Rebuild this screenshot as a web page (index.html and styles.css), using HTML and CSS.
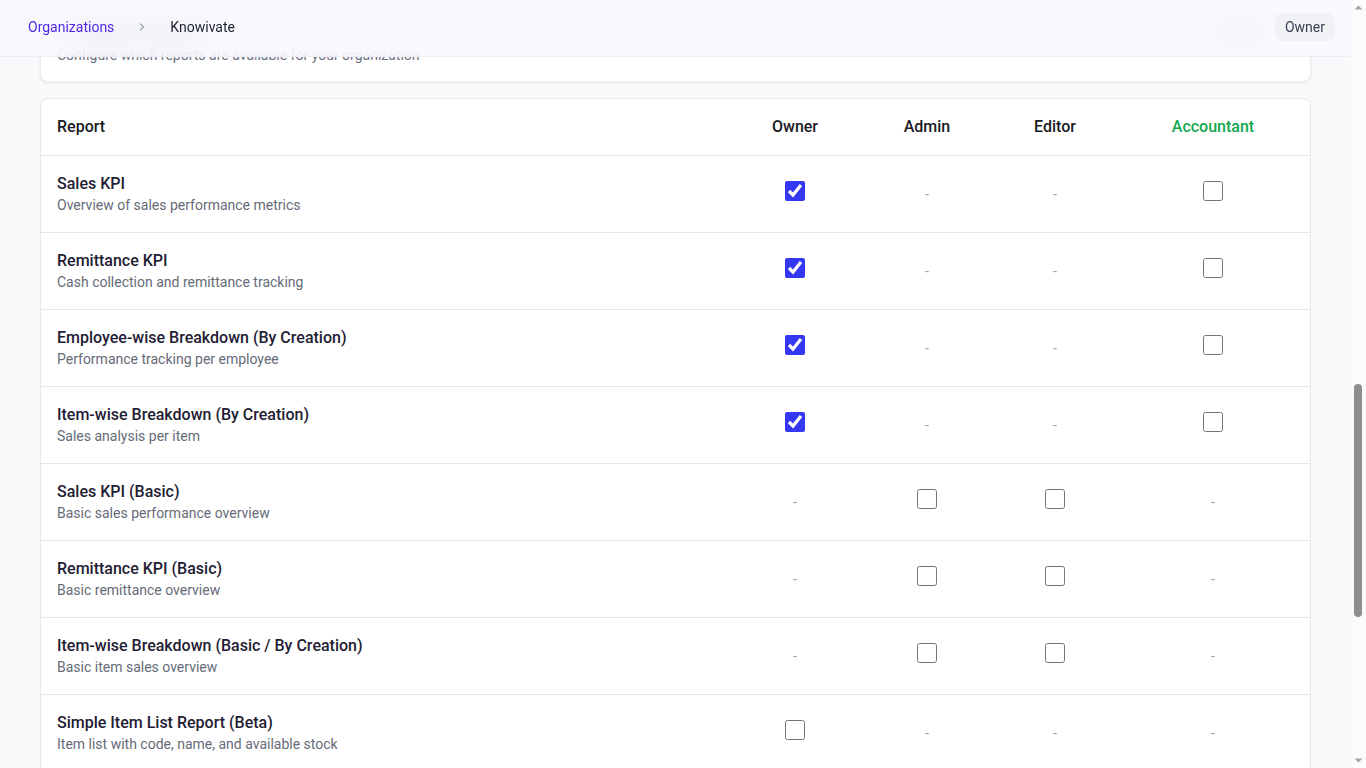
FILE: index.html
```html
<!DOCTYPE html>
<html lang="en">
<head>
    <meta charset="UTF-8">
    <meta name="viewport" content="width=device-width, initial-scale=1.0">
    <title>Knowivate - Organization Settings</title>
    <link rel="stylesheet" href="styles.css">
</head>
<body>
<div class="scroller" id="scroller">
    <header class="topbar">
        <nav class="crumbs">
            <a href="#" class="crumb-link">Organizations</a>
            <svg class="crumb-sep" width="12" height="12" viewBox="0 0 12 12"><path d="M4.5 3l3 3-3 3" fill="none" stroke="#9ca3af" stroke-width="1.2" stroke-linecap="round" stroke-linejoin="round"/></svg>
            <span class="crumb-current">Knowivate</span>
        </nav>
        <span class="role-badge">Owner</span>
    </header>

    <main class="page">
        <div class="page-head">
            <h1>Knowivate</h1>
            <p>Manage organization details, members and report access</p>
        </div>

        <section class="card">
            <h2 class="card-title">Organization Details</h2>
            <p class="card-desc">Basic information about your organization</p>
            <div class="details-grid">
                <div class="field"><span class="field-label">Name</span><span class="field-value">Knowivate</span></div>
                <div class="field"><span class="field-label">Slug</span><span class="field-value">knowivate</span></div>
                <div class="field"><span class="field-label">Created</span><span class="field-value">12 Mar 2024</span></div>
                <div class="field"><span class="field-label">Plan</span><span class="field-value">Business</span></div>
                <div class="field"><span class="field-label">Timezone</span><span class="field-value">Asia/Kolkata</span></div>
                <div class="field"><span class="field-label">Currency</span><span class="field-value">INR</span></div>
            </div>
        </section>

        <section class="card">
            <h2 class="card-title">Members</h2>
            <p class="card-desc">People who have access to this organization</p>
            <div class="member-list">
                <div class="member"><span class="avatar">AK</span><div class="member-info"><span class="member-name">Arjun Kumar</span><span class="member-mail">arjun@knowivate.com</span></div><span class="member-role">Owner</span></div>
                <div class="member"><span class="avatar">PS</span><div class="member-info"><span class="member-name">Priya Sharma</span><span class="member-mail">priya@knowivate.com</span></div><span class="member-role">Admin</span></div>
                <div class="member"><span class="avatar">RV</span><div class="member-info"><span class="member-name">Rahul Verma</span><span class="member-mail">rahul@knowivate.com</span></div><span class="member-role">Editor</span></div>
                <div class="member"><span class="avatar">NI</span><div class="member-info"><span class="member-name">Neha Iyer</span><span class="member-mail">neha@knowivate.com</span></div><span class="member-role">Editor</span></div>
                <div class="member"><span class="avatar">SM</span><div class="member-info"><span class="member-name">Suresh Menon</span><span class="member-mail">suresh@knowivate.com</span></div><span class="member-role">Accountant</span></div>
                <div class="member"><span class="avatar">DG</span><div class="member-info"><span class="member-name">Divya Gupta</span><span class="member-mail">divya@knowivate.com</span></div><span class="member-role">Editor</span></div>
                <div class="member"><span class="avatar">VN</span><div class="member-info"><span class="member-name">Vikram Nair</span><span class="member-mail">vikram@knowivate.com</span></div><span class="member-role">Admin</span></div>
            </div>
        </section>

        <section class="card settings-card">
            <div class="settings-head">
                <div>
                    <h2 class="card-title">
                        <svg width="18" height="18" viewBox="0 0 24 24" fill="none" stroke="#5028e6" stroke-width="2" stroke-linecap="round" stroke-linejoin="round"><path d="M3 3v18h18"/><path d="M7 15l4-4 3 3 5-6"/></svg>
                        Report Access
                    </h2>
                    <p class="card-desc">Configure which reports are available for your organization</p>
                </div>
                <button class="ghost-btn">Reset</button>
            </div>
        </section>

        <div class="table-card" id="reportTable">
            <div class="report-row head-row">
                <div class="cell report-cell">Report</div>
                <div class="cell">Owner</div>
                <div class="cell">Admin</div>
                <div class="cell">Editor</div>
                <div class="cell role-accent">Accountant</div>
            </div>

            <div class="report-row">
                <div class="cell report-cell"><span class="report-name">Sales KPI</span><span class="report-desc">Overview of sales performance metrics</span></div>
                <div class="cell"><input type="checkbox" checked></div>
                <div class="cell"><span class="na">-</span></div>
                <div class="cell"><span class="na">-</span></div>
                <div class="cell"><input type="checkbox"></div>
            </div>
            <div class="report-row">
                <div class="cell report-cell"><span class="report-name">Remittance KPI</span><span class="report-desc">Cash collection and remittance tracking</span></div>
                <div class="cell"><input type="checkbox" checked></div>
                <div class="cell"><span class="na">-</span></div>
                <div class="cell"><span class="na">-</span></div>
                <div class="cell"><input type="checkbox"></div>
            </div>
            <div class="report-row">
                <div class="cell report-cell"><span class="report-name">Employee-wise Breakdown (By Creation)</span><span class="report-desc">Performance tracking per employee</span></div>
                <div class="cell"><input type="checkbox" checked></div>
                <div class="cell"><span class="na">-</span></div>
                <div class="cell"><span class="na">-</span></div>
                <div class="cell"><input type="checkbox"></div>
            </div>
            <div class="report-row">
                <div class="cell report-cell"><span class="report-name">Item-wise Breakdown (By Creation)</span><span class="report-desc">Sales analysis per item</span></div>
                <div class="cell"><input type="checkbox" checked></div>
                <div class="cell"><span class="na">-</span></div>
                <div class="cell"><span class="na">-</span></div>
                <div class="cell"><input type="checkbox"></div>
            </div>
            <div class="report-row">
                <div class="cell report-cell"><span class="report-name">Sales KPI (Basic)</span><span class="report-desc">Basic sales performance overview</span></div>
                <div class="cell"><span class="na">-</span></div>
                <div class="cell"><input type="checkbox"></div>
                <div class="cell"><input type="checkbox"></div>
                <div class="cell"><span class="na">-</span></div>
            </div>
            <div class="report-row">
                <div class="cell report-cell"><span class="report-name">Remittance KPI (Basic)</span><span class="report-desc">Basic remittance overview</span></div>
                <div class="cell"><span class="na">-</span></div>
                <div class="cell"><input type="checkbox"></div>
                <div class="cell"><input type="checkbox"></div>
                <div class="cell"><span class="na">-</span></div>
            </div>
            <div class="report-row">
                <div class="cell report-cell"><span class="report-name">Item-wise Breakdown (Basic / By Creation)</span><span class="report-desc">Basic item sales overview</span></div>
                <div class="cell"><span class="na">-</span></div>
                <div class="cell"><input type="checkbox"></div>
                <div class="cell"><input type="checkbox"></div>
                <div class="cell"><span class="na">-</span></div>
            </div>
            <div class="report-row">
                <div class="cell report-cell"><span class="report-name">Simple Item List Report (Beta)</span><span class="report-desc">Item list with code, name, and available stock</span></div>
                <div class="cell"><input type="checkbox"></div>
                <div class="cell"><span class="na">-</span></div>
                <div class="cell"><span class="na">-</span></div>
                <div class="cell"><span class="na">-</span></div>
            </div>
            <div class="report-row">
                <div class="cell report-cell"><span class="report-name">Customer-wise Breakdown</span><span class="report-desc">Sales analysis per customer</span></div>
                <div class="cell"><input type="checkbox"></div>
                <div class="cell"><span class="na">-</span></div>
                <div class="cell"><span class="na">-</span></div>
                <div class="cell"><input type="checkbox"></div>
            </div>
            <div class="report-row">
                <div class="cell report-cell"><span class="report-name">Outstanding Receivables</span><span class="report-desc">Pending payments grouped by customer</span></div>
                <div class="cell"><input type="checkbox"></div>
                <div class="cell"><span class="na">-</span></div>
                <div class="cell"><span class="na">-</span></div>
                <div class="cell"><input type="checkbox"></div>
            </div>
            <div class="report-row">
                <div class="cell report-cell"><span class="report-name">Stock Summary (Beta)</span><span class="report-desc">Current stock levels across warehouses</span></div>
                <div class="cell"><input type="checkbox"></div>
                <div class="cell"><span class="na">-</span></div>
                <div class="cell"><span class="na">-</span></div>
                <div class="cell"><span class="na">-</span></div>
            </div>
        </div>

        <p class="footnote">Changes are saved automatically.</p>
    </main>
</div>

<div class="rail">
    <svg class="rail-arrow" width="15" height="15" viewBox="0 0 15 15"><path d="M3.5 9.5h8l-4-4z" fill="#a3a3a3"/></svg>
    <div class="rail-track"><div class="rail-thumb"></div></div>
    <svg class="rail-arrow" width="15" height="15" viewBox="0 0 15 15"><path d="M3.5 5.5h8l-4 4z" fill="#a3a3a3"/></svg>
</div>

    <script src="script.js"></script>
</body>
</html>
```

FILE: styles.css
```css
* {
    box-sizing: border-box;
}
html, body {
    height: 100%;
    overflow: hidden;
}
body {
    margin: 0;
    display: flex;
    font-family: Roboto, "Noto Sans", sans-serif;
    background: #f8f9fb;
    color: #1f2033;
}
.scroller {
    flex: 1;
    height: 100vh;
    overflow-y: scroll;
}

/* scrollbar rail */
.rail {
    width: 15px;
    flex-shrink: 0;
    display: flex;
    flex-direction: column;
    background: #fbfbfa;
}
.rail-arrow {
    display: block;
    flex-shrink: 0;
}
.rail-track {
    flex: 1;
    padding-top: 369px;
}
.rail-thumb {
    width: 8px;
    height: 233px;
    margin-left: 3px;
    border-radius: 4px;
    background: #8e8e8e;
}

/* top bar */
.topbar {
    position: sticky;
    top: 0;
    z-index: 10;
    height: 57px;
    display: flex;
    align-items: center;
    justify-content: space-between;
    padding: 0 16px 2px;
    background: rgba(248, 249, 252, 0.82);
    backdrop-filter: blur(14px);
    border-bottom: 1px solid #eceef3;
}
.crumbs {
    display: flex;
    align-items: center;
    gap: 10px;
    font-size: 14px;
}
.crumb-link {
    color: #5028e6;
    text-decoration: none;
    padding: 4px 12px;
}
.crumb-current {
    color: #1f2033;
    padding: 4px 12px;
}
.role-badge {
    font-size: 14px;
    color: #374151;
    background: #f1f2f6;
    padding: 6px 10px;
    border-radius: 8px;
}

/* page */
.page {
    padding: 0 40px 40px;
}
.page-head {
    padding: 32px 0 24px;
}
.page-head h1 {
    margin: 0;
    font-size: 28px;
    font-weight: 600;
}
.page-head p {
    margin: 6px 0 0;
    color: #6b7280;
    font-size: 14px;
}
.card {
    background: white;
    border: 1px solid #eceef2;
    border-radius: 8px;
    box-shadow: 0 1px 3px rgba(0,0,0,0.08);
    padding: 16px;
    margin-bottom: 24px;
}
.card-title {
    margin: 0;
    font-size: 18px;
    line-height: 28px;
    font-weight: 600;
    display: flex;
    align-items: center;
    gap: 8px;
}
.card-desc {
    margin: 0;
    font-size: 14px;
    line-height: 20px;
    color: #6b7280;
}
.details-grid {
    display: grid;
    grid-template-columns: repeat(3, 1fr);
    gap: 20px;
    margin-top: 24px;
}
.field {
    display: flex;
    flex-direction: column;
    gap: 6px;
    padding: 12px;
    border: 1px solid #eef0f3;
    border-radius: 6px;
}
.field-label {
    font-size: 12px;
    color: #6b7280;
}
.field-value {
    font-size: 15px;
    font-weight: 500;
}
.member-list {
    margin-top: 16px;
}
.member {
    display: flex;
    align-items: center;
    gap: 12px;
    padding: 12px 0;
    border-top: 1px solid #eef0f3;
}
.avatar {
    width: 40px;
    height: 40px;
    border-radius: 50%;
    background: #ede9fe;
    color: #5028e6;
    display: flex;
    align-items: center;
    justify-content: center;
    font-size: 14px;
    font-weight: 600;
}
.member-info {
    flex: 1;
    display: flex;
    flex-direction: column;
}
.member-name {
    font-weight: 500;
}
.member-mail {
    font-size: 13px;
    color: #6b7280;
}
.member-role {
    font-size: 13px;
    background: #f1f2f6;
    padding: 4px 10px;
    border-radius: 12px;
}
.settings-card {
    margin-bottom: 16px;
}
.settings-head {
    display: flex;
    justify-content: space-between;
    align-items: flex-start;
}
.ghost-btn {
    font-family: inherit;
    font-size: 14px;
    background: #eceef2;
    border: none;
    border-radius: 16px;
    padding: 6px 16px;
    color: #374151;
    margin-right: 20px;
}

/* report access table */
.table-card {
    background: white;
    border: 1px solid #e5e7eb;
    border-radius: 8px;
    overflow: hidden;
}
.report-row {
    display: grid;
    grid-template-columns: 1fr 130px 134px 122px 194px;
    border-top: 1px solid #e5e7eb;
}
.head-row {
    border-top: none;
    font-size: 16px;
    font-weight: 500;
    color: #1a1a22;
}
.cell {
    padding: 16px;
    display: flex;
    align-items: center;
    justify-content: center;
    line-height: 24px;
}
.report-cell {
    flex-direction: column;
    align-items: flex-start;
    justify-content: center;
}
.report-row:not(.head-row) .report-cell {
    padding: 17px 16px;
}
.role-accent {
    color: #12a84f;
}
.report-name {
    font-size: 16px;
    line-height: 22px;
    font-weight: 500;
    color: #1f2033;
}
.report-desc {
    font-size: 14px;
    line-height: 20px;
    color: #656b78;
}
.na {
    font-size: 14px;
    color: #9ca3af;
}
.cell input[type="checkbox"] {
    width: 20px;
    height: 20px;
    margin: 0 0 6px;
    accent-color: #3538f2;
}
.footnote {
    font-size: 13px;
    color: #9ca3af;
    margin: 16px 0 0;
}
```

FILE: script.js
```js
// keep the report access table in view
const scroller = document.getElementById('scroller');
const reportTable = document.getElementById('reportTable');
const tableTop = reportTable.getBoundingClientRect().top + scroller.scrollTop;
scroller.scrollTop = tableTop - 98;
```
